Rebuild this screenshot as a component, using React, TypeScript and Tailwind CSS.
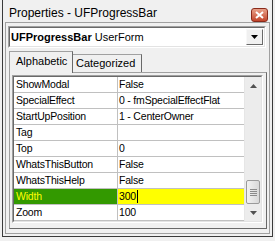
const rows: [string, string][] = [
  ["ShowModal", "False"],
  ["SpecialEffect", "0 - fmSpecialEffectFlat"],
  ["StartUpPosition", "1 - CenterOwner"],
  ["Tag", ""],
  ["Top", "0"],
  ["WhatsThisButton", "False"],
  ["WhatsThisHelp", "False"],
  ["Width", "300"],
  ["Zoom", "100"],
];

function Grip() {
  return (
    <div className="flex flex-col gap-[1px]">
      <div className="w-[7px] h-[1px] bg-[#8a8a8a]" />
      <div className="w-[7px] h-[1px] bg-[#8a8a8a]" />
      <div className="w-[7px] h-[1px] bg-[#8a8a8a]" />
      <div className="w-[7px] h-[1px] bg-[#8a8a8a]" />
    </div>
  );
}

export default function App() {
  return (
    <div
      className="w-[275px] h-[241px] bg-[#f0f0f0] pl-[2px] pr-[2px] pb-[4px] text-black"
      style={{ fontFamily: '"Liberation Sans", Arial, sans-serif' }}
    >
      <div className="h-full border-x border-b border-[#3a3a3a] flex flex-col">
        {/* title bar */}
        <div className="h-[22px] shrink-0 flex items-start justify-between pl-[6px] pr-[4px]">
          <span className="text-[12px] leading-[14px] mt-[6px]">Properties - UFProgressBar</span>
          <div className="mt-[8px] w-[17px] h-[14px] rounded-[3px] border border-[#8a2a1a] bg-gradient-to-b from-[#e8a089] to-[#c2442a] flex items-center justify-center">
            <svg width="9" height="8" viewBox="0 0 9 8">
              <path d="M1 1 L8 7 M8 1 L1 7" stroke="#ffffff" strokeWidth="2" />
            </svg>
          </div>
        </div>
        {/* body */}
        <div className="flex-1 mx-[2px] mb-[2px] border border-[#a0a0a0] flex flex-col">
          {/* dropdown */}
          <div className="mt-[3px] ml-[2px] mr-[3px] h-[22px] border border-t-[#a0a0a0] border-l-[#a0a0a0] border-r-[#ffffff] border-b-[#ffffff]">
            <div className="h-full border border-t-[#696969] border-l-[#696969] border-r-[#e3e3e3] border-b-[#e3e3e3] bg-white flex items-center justify-between pl-[1px] pr-[1px]">
              <span className="text-[11px] leading-[13px] whitespace-nowrap">
                <b>UFProgressBar</b> UserForm
              </span>
              <div className="w-[17px] h-[16px] border border-t-[#f8f8f8] border-l-[#f8f8f8] border-r-[#696969] border-b-[#696969] bg-[#f0f0f0] flex items-center justify-center">
                <svg width="7" height="4" viewBox="0 0 7 4">
                  <path d="M0 0 H7 L3.5 4 Z" fill="#000" />
                </svg>
              </div>
            </div>
          </div>
          {/* tabs */}
          <div className="mt-[3px] ml-[3px] h-[21px] flex items-end">
            <div className="relative z-10 w-[64px] border border-b-0 border-[#a0a0a0] border-r-[#696969] bg-[#f0f0f0] flex items-start pl-[6px] pt-[3px] -mb-[1px] h-[22px]">
              <span className="text-[11px] leading-[13px]">Alphabetic</span>
            </div>
            <div className="h-[18px] w-[69px] border border-b-0 border-l-0 border-[#a0a0a0] border-r-[#696969] flex items-start pl-[3px] pt-[2px]">
              <span className="text-[11px] leading-[13px]">Categorized</span>
            </div>
          </div>
          {/* tab panel */}
          <div className="flex-1 ml-[3px] mr-[2px] mb-[4px] border border-[#a0a0a0] border-r-[#696969] border-b-[#696969] pt-[2px] pl-[2px] pr-[3px] pb-[2px] flex flex-col">
            <div className="border border-t-[#a0a0a0] border-l-[#a0a0a0] border-r-[#ffffff] border-b-[#ffffff]">
              <div className="border border-t-[#696969] border-l-[#696969] border-r-[#e3e3e3] border-b-[#e3e3e3] bg-white flex">
                <div className="flex-1 flex flex-col">
                  {rows.map(([k, v]) => {
                    const sel = k === "Width";
                    return (
                      <div key={k} className="h-[16px] flex border-b border-[#c0c0c0] text-[10.5px] tracking-[-0.2px] leading-[15px]">
                        <div className={`w-[104px] border-r border-[#c0c0c0] pl-[2px] whitespace-nowrap ${sel ? "bg-[#339900] text-[#ffff00]" : ""}`}>
                          {k}
                        </div>
                        <div className={`flex-1 pl-[1px] whitespace-nowrap flex items-start ${sel ? "bg-[#ffff00]" : ""}`}>
                          {v}
                          {sel && <span className="inline-block w-[1px] h-[13px] bg-black mt-[1px] ml-[1px]" />}
                        </div>
                      </div>
                    );
                  })}
                </div>
                {/* scrollbar */}
                <div className="w-[17px] bg-[#ececec] border-l border-[#e6e6e6] flex flex-col justify-between">
                  <div className="h-[17px] flex items-center justify-center">
                    <svg width="7" height="4" viewBox="0 0 7 4">
                      <path d="M0 4 H7 L3.5 0 Z" fill="#505050" />
                    </svg>
                  </div>
                  <div className="flex flex-col">
                    <div className="h-[24px] mx-[1px] rounded-[2px] border border-[#9a9a9a] bg-gradient-to-r from-[#f2f2f2] to-[#d8d8d8] flex items-center justify-center">
                      <Grip />
                    </div>
                    <div className="h-[17px] flex items-center justify-center">
                      <svg width="7" height="4" viewBox="0 0 7 4">
                        <path d="M0 0 H7 L3.5 4 Z" fill="#505050" />
                      </svg>
                    </div>
                  </div>
                </div>
              </div>
            </div>
          </div>
        </div>
      </div>
    </div>
  );
}
